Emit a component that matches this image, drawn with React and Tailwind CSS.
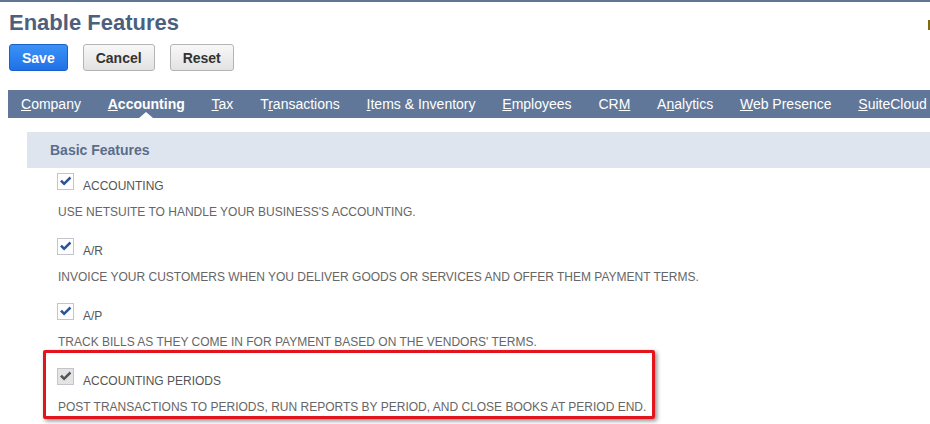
import React from "react";

const tabs = [
  { pre: "", key: "C", post: "ompany" },
  { pre: "", key: "A", post: "ccounting", active: true },
  { pre: "", key: "T", post: "ax" },
  { pre: "T", key: "r", post: "ansactions" },
  { pre: "", key: "I", post: "tems & Inventory" },
  { pre: "", key: "E", post: "mployees" },
  { pre: "CR", key: "M", post: "" },
  { pre: "A", key: "n", post: "alytics" },
  { pre: "", key: "W", post: "eb Presence" },
  { pre: "", key: "S", post: "uiteCloud" },
];

const features = [
  { label: "ACCOUNTING", desc: "USE NETSUITE TO HANDLE YOUR BUSINESS'S ACCOUNTING." },
  { label: "A/R", desc: "INVOICE YOUR CUSTOMERS WHEN YOU DELIVER GOODS OR SERVICES AND OFFER THEM PAYMENT TERMS." },
  { label: "A/P", desc: "TRACK BILLS AS THEY COME IN FOR PAYMENT BASED ON THE VENDORS' TERMS." },
  { label: "ACCOUNTING PERIODS", desc: "POST TRANSACTIONS TO PERIODS, RUN REPORTS BY PERIOD, AND CLOSE BOOKS AT PERIOD END.", disabled: true },
];

function Check({ disabled }) {
  return (
    <div
      className={
        "w-[17px] h-[17px] border border-[#c2c6cc] flex items-center justify-center shrink-0 " +
        (disabled ? "bg-[#e4e4e4]" : "bg-white")
      }
    >
      <svg width="13" height="11" viewBox="0 0 13 11">
        <path
          d="M1 5.6 L3 3.8 L5.1 6 L10.6 0.6 L12.3 2.4 L5.1 9.6 Z"
          fill={disabled ? "#555555" : "#2c5597"}
        />
      </svg>
    </div>
  );
}

export default function App() {
  return (
    <div className="relative w-[930px] h-[424px] overflow-hidden bg-white font-['Liberation_Sans',Arial,sans-serif]">
      <div className="h-[2px] bg-[#5f7594]" />
      <div className="absolute top-[20px] right-0 w-[2px] h-[10px] bg-[#7d6c14]" />

      <h1 className="mt-[8px] pl-[9px] text-[22px] leading-[26px] font-bold text-[#4c5f7c]">
        Enable Features
      </h1>

      <div className="mt-[8px] pl-[9px] flex gap-[15px]">
        <button className="h-[27px] px-[12px] rounded-[3px] border border-[#1b5fc9] bg-gradient-to-b from-[#3b91f7] to-[#1f72e6] text-white text-[14px] font-bold leading-none">
          Save
        </button>
        <button className="h-[27px] px-[12px] rounded-[3px] border border-[#b4b4b4] bg-gradient-to-b from-[#f8f8f8] to-[#e2e2e2] text-[#333] text-[14px] font-bold leading-none">
          Cancel
        </button>
        <button className="h-[27px] px-[12px] rounded-[3px] border border-[#b4b4b4] bg-gradient-to-b from-[#f8f8f8] to-[#e2e2e2] text-[#333] text-[14px] font-bold leading-none">
          Reset
        </button>
      </div>

      <nav className="mt-[19px] ml-[8px] h-[28px] bg-[#607799] flex gap-[26.8px] pl-[13px] overflow-hidden whitespace-nowrap">
        {tabs.map((t, i) => (
          <div
            key={i}
            className={
              "relative h-[28px] leading-[28px] text-[14px] text-white shrink-0 " +
              (t.active ? "font-bold" : "")
            }
          >
            {t.pre}
            <u>{t.key}</u>
            {t.post}
            {t.active && (
              <span className="absolute bottom-0 left-1/2 -translate-x-1/2 w-0 h-0 border-x-[7px] border-x-transparent border-b-[6px] border-b-white" />
            )}
          </div>
        ))}
      </nav>

      <section className="mt-[14px] ml-[27px]">
        <div className="h-[36px] bg-[#dfe5ee] pl-[23px] flex items-center text-[14px] font-bold text-[#5a6d8b]">
          Basic Features
        </div>
        <div className="pt-[5px] pl-[30px]">
          {features.map((f, i) => (
            <div key={i} className="h-[65px]">
              <div className="flex items-start">
                <Check disabled={f.disabled} />
                <span className="ml-[9px] mt-[6px] text-[12px] leading-[14px] text-[#555]">{f.label}</span>
              </div>
              <p className="mt-[12px] ml-[1px] text-[12px] leading-[14px] text-[#666] whitespace-nowrap">{f.desc}</p>
            </div>
          ))}
        </div>
      </section>

      <div className="absolute left-[43px] top-[350px] w-[612px] h-[69px] border-[3px] border-[#e3141c] rounded-[2px] shadow-[2px_2px_4px_rgba(0,0,0,0.45)]" />
    </div>
  );
}
